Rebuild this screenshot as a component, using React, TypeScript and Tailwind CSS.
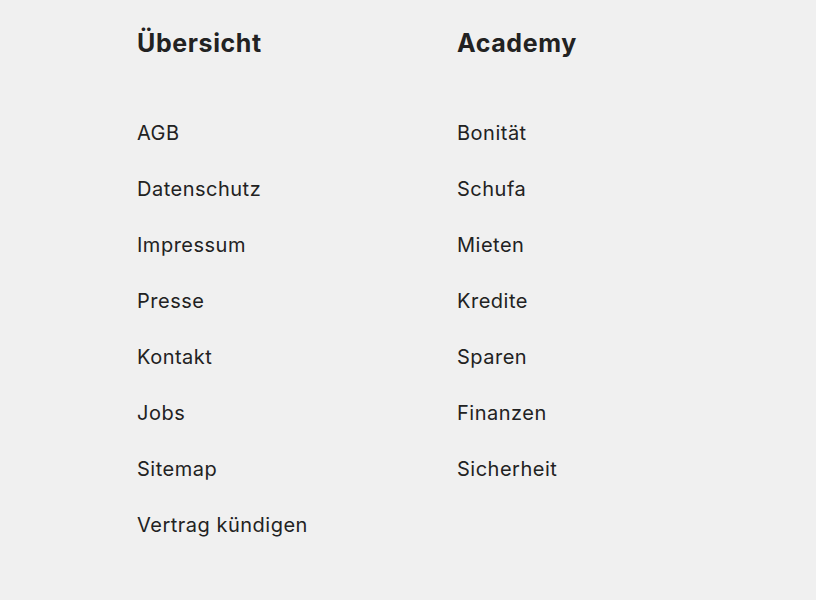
export default function App() {
  const columns = [
    {
      title: "Übersicht",
      links: ["AGB", "Datenschutz", "Impressum", "Presse", "Kontakt", "Jobs", "Sitemap", "Vertrag kündigen"],
    },
    {
      title: "Academy",
      links: ["Bonität", "Schufa", "Mieten", "Kredite", "Sparen", "Finanzen", "Sicherheit"],
    },
  ]

  return (
    <div className="min-h-screen bg-[#f0f0f0] font-['Inter',sans-serif] text-[#222222]">
      <div className="flex pl-[137px] pt-[28px]">
        {columns.map((col) => (
          <div key={col.title} className="w-[320px]">
            <h2 className="text-[25px] font-bold leading-[30px] tracking-[0.6px]">{col.title}</h2>
            <ul className="mt-[47px]">
              {col.links.map((link) => (
                <li key={link} className="flex h-[56px] items-center">
                  <a href="#" className="text-[20px] leading-[24px] tracking-[0.5px]">
                    {link}
                  </a>
                </li>
              ))}
            </ul>
          </div>
        ))}
      </div>
    </div>
  )
}
